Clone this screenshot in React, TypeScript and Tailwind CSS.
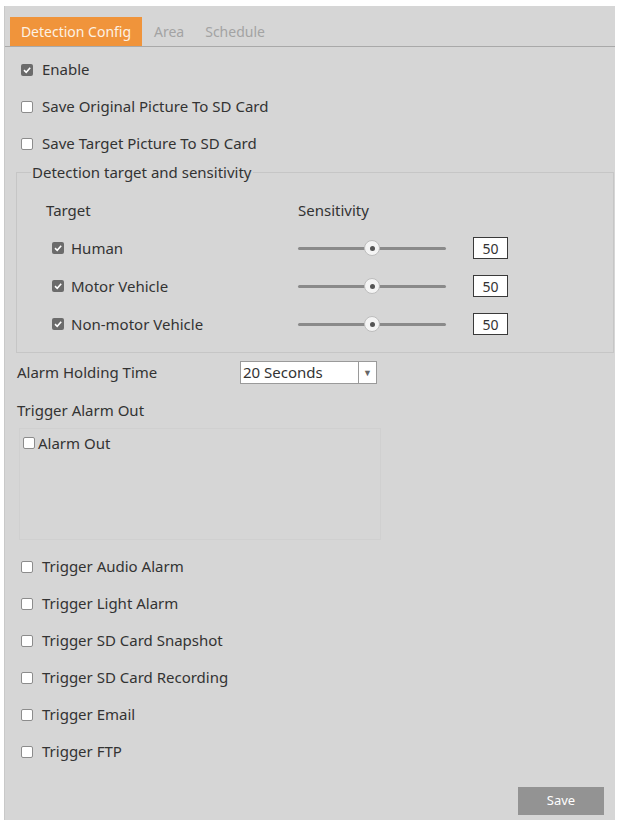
import React from "react";

const font = { fontFamily: '"Noto Sans", "Open Sans", Arial, sans-serif' };

function Box({ checked = false }: { checked?: boolean }) {
  if (checked) {
    return (
      <span className="inline-flex h-[12px] w-[12px] shrink-0 items-center justify-center rounded-[2px] bg-[#6b6b6b]">
        <svg width="10" height="10" viewBox="0 0 10 10">
          <path d="M2 5.2 L4.2 7.3 L8.2 2.8" fill="none" stroke="#ffffff" strokeWidth="1.6" />
        </svg>
      </span>
    );
  }
  return <span className="inline-block h-[12px] w-[12px] shrink-0 rounded-[2px] border border-[#8c8c8c] bg-white" />;
}

function CheckRow({ label, checked = false }: { label: string; checked?: boolean }) {
  return (
    <div className="flex h-[37px] items-center gap-[9px] pl-[16px] text-[15px] text-[#333]">
      <Box checked={checked} />
      <span>{label}</span>
    </div>
  );
}

function Slider() {
  return (
    <div className="relative flex h-[20px] w-[148px] items-center">
      <div className="h-[3px] w-full rounded-full bg-[#8a8a8a]" />
      <div className="absolute left-[66px] top-[2px] flex h-[16px] w-[16px] items-center justify-center rounded-full border border-[#bdbdbd] bg-[#f4f4f4]">
        <div className="h-[5px] w-[5px] rounded-full bg-[#555]" />
      </div>
    </div>
  );
}

function TargetRow({ label }: { label: string }) {
  return (
    <div className="flex h-[38px] items-center">
      <div className="flex w-[252px] items-center gap-[7px] pl-[6px]">
        <Box checked />
        <span>{label}</span>
      </div>
      <Slider />
      <div className="ml-[27px] flex h-[22px] w-[35px] items-center justify-center border border-[#3a3a3a] bg-white text-[14px] text-[#333]">
        50
      </div>
    </div>
  );
}

export default function App() {
  return (
    <div className="min-h-[823px] bg-white pl-[4px] pt-[6px]" style={font}>
      <div className="flex h-[814px] w-[611px] flex-col border-l border-[#c9c9c9] bg-[#d6d6d6]">
        {/* tabs */}
        <div className="mt-[11px] flex h-[30px] items-stretch border-b border-[#a9a9a9] pl-[5px] text-[14px]">
          <div className="flex w-[132px] items-center justify-center bg-[#f0943b] text-[#fdf2e4]">Detection Config</div>
          <div className="flex items-center pl-[12px] text-[#a3a3a3]">Area</div>
          <div className="flex items-center pl-[21px] text-[#a3a3a3]">Schedule</div>
        </div>

        <div className="pt-[4px]">
          <CheckRow label="Enable" checked />
          <CheckRow label="Save Original Picture To SD Card" />
          <CheckRow label="Save Target Picture To SD Card" />
        </div>

        {/* detection target fieldset */}
        <fieldset className="mt-[1px] ml-[11px] mr-[1px] border border-[#c6c6c6] pb-[9px] text-[15px] text-[#333]">
          <legend className="ml-[14px] px-[1px] leading-[18px]">Detection target and sensitivity</legend>
          <div className="pl-[29px] pt-[10px]">
            <div className="flex h-[38px] items-center">
              <div className="w-[252px]">Target</div>
              <div>Sensitivity</div>
            </div>
            <TargetRow label="Human" />
            <TargetRow label="Motor Vehicle" />
            <TargetRow label="Non-motor Vehicle" />
          </div>
        </fieldset>

        {/* alarm holding time */}
        <div className="mt-[8px] flex h-[23px] items-center pl-[12px] text-[15px] text-[#333]">
          <span className="w-[223px]">Alarm Holding Time</span>
          <div className="flex h-[23px] w-[137px] border border-[#9a9a9a] bg-white">
            <span className="flex flex-1 items-center pl-[2px]">20 Seconds</span>
            <span className="flex w-[18px] items-center justify-center border-l border-[#9a9a9a] text-[9px] text-[#666]">▼</span>
          </div>
        </div>

        <div className="mt-[17px] flex h-[18px] items-center pl-[12px] text-[15px] text-[#333]">Trigger Alarm Out</div>

        <div className="ml-[14px] mt-[9px] h-[112px] w-[362px] border border-[#d0d0d0] pl-[3px] pt-[3px] text-[15px] text-[#333]">
          <div className="flex items-center gap-[3px]">
            <Box />
            <span>Alarm Out</span>
          </div>
        </div>

        <div className="pt-[8px]">
          <CheckRow label="Trigger Audio Alarm" />
          <CheckRow label="Trigger Light Alarm" />
          <CheckRow label="Trigger SD Card Snapshot" />
          <CheckRow label="Trigger SD Card Recording" />
          <CheckRow label="Trigger Email" />
          <CheckRow label="Trigger FTP" />
        </div>

        <div className="mt-[17px] flex justify-end pr-[11px]">
          <button className="h-[28px] w-[86px] bg-[#939393] text-[13px] text-white">Save</button>
        </div>
      </div>
    </div>
  );
}
